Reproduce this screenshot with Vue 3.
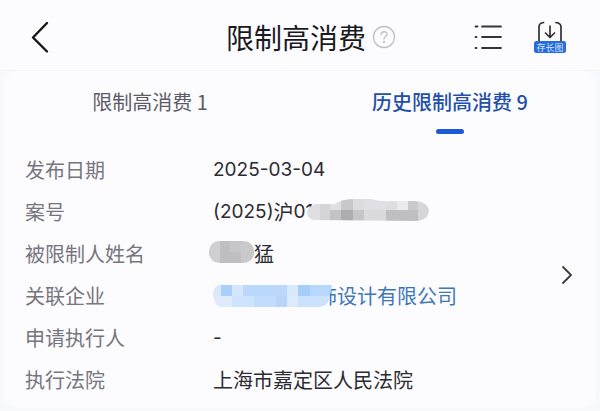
<script setup>
import { ref } from 'vue'

const active = ref(1)
const tabs = [
  { name: '限制高消费', count: 1 },
  { name: '历史限制高消费', count: 9 }
]

// Mosaic tiles: x, y, width, height, colour
const caseTiles = [
  [0, 0, 13, 22, '#dfdee1'], [13, 0, 10, 22, '#d5d4d8'], [23, 11, 11, 11, '#c3c2c6'], [23, 0, 11, 11, '#dfdfe2'],
  [34, 0, 12, 11, '#c8c7cb'], [34, 11, 12, 11, '#adacb0'], [46, 0, 11, 11, '#dcdcdf'],
  [46, 11, 11, 11, '#c6c5c9'], [57, 0, 22, 11, '#e0e0e4'], [57, 11, 22, 11, '#dadadd'],
  [79, 0, 11, 11, '#dedee1'], [90, 0, 11, 11, '#eaeaed'], [79, 11, 32, 11, '#bfbec2'],
  [101, 0, 11, 11, '#cacacd'], [111, 0, 11, 22, '#d6d6d9']
]
const firmTiles = [
  [0, 0, 8, 11, '#d9e8fb'], [8, 0, 11, 11, '#a9cffa'], [19, 0, 11, 11, '#d5e7fd'],
  [30, 0, 44, 11, '#b9d8fb'], [74, 0, 11, 11, '#d9e9fc'], [85, 0, 12, 11, '#a5cdfa'],
  [97, 0, 22, 11, '#b8d7fc'], [0, 11, 19, 11, '#dfeafb'], [19, 11, 22, 11, '#cee3fc'],
  [41, 11, 22, 11, '#c2dcfb'], [63, 11, 11, 11, '#b5d5fa'], [74, 11, 11, 11, '#dceafb'],
  [85, 11, 34, 11, '#cbe1fc']
]
const nameTiles = [
  [0, 0, 11, 22, '#cfced1'], [11, 0, 10, 22, '#bfbec1'], [21, 0, 11, 11, '#c7c6c9'],
  [21, 11, 11, 11, '#bfbec1'], [32, 0, 13, 22, '#c9c8cb']
]
</script>

<template>
  <div class="page">
    <header class="bar">
      <button class="icon back" aria-label="返回">
        <svg width="20" height="34" viewBox="0 0 20 34"><path d="M17 3 3 17.500 17 31.500" fill="none" stroke="#17171b" stroke-width="2.400" stroke-linecap="round" stroke-linejoin="round" /></svg>
      </button>
      <div class="heading">
        <h1>限制高消费</h1>
        <button class="icon" aria-label="说明">
          <svg width="24" height="24" viewBox="0 0 24 24" fill="none" stroke="#c0bfc5" stroke-width="1.300" stroke-linecap="round">
            <circle cx="12" cy="12" r="10.500" />
            <path d="M9 9.800c0-4 6-4 6-.5 0 2.200-3 2.300-3 4.700" />
            <circle cx="12" cy="17" r=".5" fill="#c0bfc5" />
          </svg>
        </button>
      </div>
      <div class="actions">
        <button class="icon" aria-label="列表">
          <svg width="28" height="26" viewBox="0 0 28 26" stroke="#34343a" stroke-width="1.800" stroke-linecap="round">
            <path d="M8 2.500h19M8 13h19M8 24h19M1.500 2.500h2M1.500 13h1M1.500 24h1" />
          </svg>
        </button>
        <button class="icon" aria-label="存长图">
          <svg width="32" height="34" viewBox="0 0 32 34">
            <path d="M5 22V7q0-4 4.500-4.500M22 2.500q5 .5 5 4.500v15M16 6v11M11.500 13l4.500 4.500 4.500-4.500" fill="none" stroke="#303036" stroke-width="1.700" stroke-linecap="round" stroke-linejoin="round" />
            <rect x="0" y="21" width="32" height="12" rx="2.500" fill="#286bdb" />
            <text x="16" y="30.500" text-anchor="middle" class="save">存长图</text>
          </svg>
        </button>
      </div>
    </header>

    <main class="card">
      <nav class="tabs" role="tablist">
        <button v-for="(tab, i) in tabs" :key="tab.name" class="tab" :class="{ on: i === active }" role="tab" :aria-selected="i === active" @click="active = i">
          {{ tab.name }} {{ tab.count }}
        </button>
      </nav>

      <div class="record">
        <dl class="fields">
          <dt>发布日期</dt>
          <dd class="num">2025-03-04</dd>
          <dt>案号</dt>
          <dd>
            <span class="num">(2025)</span>沪<span class="num">01</span>
            <svg class="mask case" width="122" height="22" viewBox="0 0 122 22" aria-hidden="true">
              <clipPath id="case"><path d="M8 5 28 5Q34 0 48 0L64 0Q74 3 86 2L108 2Q121 3 122 12 121 21 110 22L8 21Q0 20 0 13 2 7 8 5Z" /></clipPath>
              <g clip-path="url(#case)" shape-rendering="crispEdges">
                <rect v-for="(t, i) in caseTiles" :key="i" :x="t[0]" :y="t[1]" :width="t[2]" :height="t[3]" :fill="t[4]" />
              </g>
            </svg>
          </dd>
          <dt>被限制人姓名</dt>
          <dd>
            <svg class="mask name" width="45" height="22" viewBox="0 0 45 22" aria-hidden="true">
              <clipPath id="name"><rect width="45" height="22" rx="10" /></clipPath>
              <g clip-path="url(#name)" shape-rendering="crispEdges">
                <rect v-for="(t, i) in nameTiles" :key="i" :x="t[0]" :y="t[1]" :width="t[2]" :height="t[3]" :fill="t[4]" />
              </g>
            </svg>猛
          </dd>
          <dt>关联企业</dt>
          <dd>
            <svg class="mask firm" width="119" height="22" viewBox="0 0 119 22" aria-hidden="true">
              <clipPath id="firm"><path d="M6 0H119L117 10Q116 21 106 22H8Q1 21 0 10 0 2 6 0Z" /></clipPath>
              <g clip-path="url(#firm)" shape-rendering="crispEdges">
                <rect v-for="(t, i) in firmTiles" :key="i" :x="t[0]" :y="t[1]" :width="t[2]" :height="t[3]" :fill="t[4]" />
              </g>
            </svg><a href="#">饰设计有限公司</a>
          </dd>
          <dt>申请执行人</dt>
          <dd class="num">-</dd>
          <dt>执行法院</dt>
          <dd>上海市嘉定区人民法院</dd>
        </dl>
        <button class="icon" aria-label="查看详情">
          <svg width="12" height="20" viewBox="0 0 12 20"><path d="M2 2l8 8-8 8" fill="none" stroke="#3a3a40" stroke-width="1.800" stroke-linecap="round" stroke-linejoin="round" /></svg>
        </button>
      </div>
    </main>
  </div>
</template>

<style>
body {
  margin: 0;
  background: #f8f9fc;
}
</style>

<style scoped>
.page {
  font-family: "Noto Sans CJK SC", sans-serif;
  font-size: 20px;
  color: #2c2b31;
  padding-bottom: 2px;
}
button {
  border: 0;
  padding: 0;
  background: none;
  font: inherit;
  color: inherit;
  cursor: pointer;
}
.icon {
  display: flex;
}
.bar {
  display: grid;
  grid-template-columns: 1fr auto 1fr;
  align-items: center;
  box-sizing: border-box;
  height: 71px;
  padding: 4px 34px 0 30px;
  background: #fcfcfe;
  border-bottom: 1px solid #f5f5f9;
}
.heading {
  display: flex;
  align-items: center;
  gap: 6px;
  padding-left: 26px;
}
h1 {
  margin: 0;
  font-size: 28px;
  line-height: 36px;
  font-weight: 400;
  color: #1a191e;
}
.actions {
  display: flex;
  align-items: center;
  justify-content: flex-end;
  gap: 32px;
}
.save {
  font-size: 9px;
  fill: #d6e6ff;
}
.card {
  margin: 0 4px;
  background: #fcfcfe;
  border-radius: 14px;
}
.tabs {
  display: flex;
  margin: 0 -4px;
}
.tab {
  flex: 1;
  display: flex;
  flex-direction: column;
  align-items: center;
  gap: 12px;
  padding: 16px 0 15px;
  line-height: 30px;
  color: #5d5b65;
}
.tab::after {
  content: "";
  width: 28px;
  height: 5px;
  border-radius: 3px;
}
.tab.on {
  color: #234fa8;
  font-weight: 500;
}
.tab.on::after {
  background: #1e5ad2;
}
.record {
  display: flex;
  align-items: center;
  padding: 0 23px 7px 21px;
}
.fields {
  flex: 1;
  display: grid;
  grid-template-columns: 188px 1fr;
  margin: 0;
  line-height: 42px;
}
dt {
  color: #77757e;
}
dd {
  display: flex;
  align-items: center;
  margin: 0;
  height: 42px;
}
.num {
  font-family: Inter, "Noto Sans CJK SC", sans-serif;
  font-size: 19px;
}
.mask {
  position: relative;
  flex: none;
}
.case {
  margin: 0 0 4px -6px;
}
.name {
  margin: 0 0 4px -4px;
}
.firm {
  margin-right: -15px;
}
a {
  color: #3d77b8;
  text-decoration: none;
}
</style>
